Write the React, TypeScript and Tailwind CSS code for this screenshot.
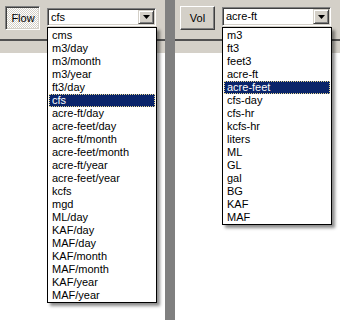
import React from 'react';

const FLOW_UNITS = [
    'cms', 'm3/day', 'm3/month', 'm3/year', 'ft3/day', 'cfs',
    'acre-ft/day', 'acre-feet/day', 'acre-ft/month', 'acre-feet/month',
    'acre-ft/year', 'acre-feet/year', 'kcfs', 'mgd', 'ML/day',
    'KAF/day', 'MAF/day', 'KAF/month', 'MAF/month', 'KAF/year', 'MAF/year'
];

const VOL_UNITS = [
    'm3', 'ft3', 'feet3', 'acre-ft', 'acre-feet', 'cfs-day', 'cfs-hr',
    'kcfs-hr', 'liters', 'ML', 'GL', 'gal', 'BG', 'KAF', 'MAF'
];

interface PanelProps {
    label: string;
    pressed: boolean;
    value: string;
    options: string[];
    selected: string;
    comboTop: string;
}

function Panel({label, pressed, value, options, selected, comboTop}: PanelProps) {
    const buttonClass = pressed
        ? 'border border-t-[#808080] border-l-[#808080] border-b-white border-r-white shadow-[inset_1px_1px_0_#404040,inset_-1px_-1px_0_#d4d0c8] bg-[repeating-conic-gradient(#d4d0c8_0_25%,#ffffff_0_50%)] bg-[length:2px_2px] pt-[1px] pl-[1px]'
        : 'border border-t-white border-l-white border-b-[#404040] border-r-[#404040] shadow-[inset_-1px_-1px_0_#808080] bg-[#d4d0c8]';

    return (
        <div className="w-[165px] h-full flex flex-col bg-white">
            <div className="h-[39px] bg-[#d4d0c8] flex items-start pl-[5px] pt-[6px] gap-[7px]">
                <div className={`w-[35px] h-[24px] flex items-center justify-center text-[11px] text-black ${buttonClass}`}>
                    {label}
                </div>
                <div className={`relative w-[109px] ${comboTop}`}>
                    <div className="h-full bg-white border border-t-[#808080] border-l-[#808080] border-b-white border-r-white shadow-[inset_1px_1px_0_#404040,inset_-1px_-1px_0_#d4d0c8] flex items-center p-[1px]">
                        <span className="flex-1 pl-[2px] text-[11px] text-black leading-none">{value}</span>
                        <div className="w-[16px] h-full bg-[#d4d0c8] border border-t-[#d4d0c8] border-l-[#d4d0c8] border-b-[#404040] border-r-[#404040] shadow-[inset_1px_1px_0_#fff,inset_-1px_-1px_0_#808080] flex items-center justify-center">
                            <svg width="7" height="4" viewBox="0 0 7 4">
                                <path d="M0 0h7L3.5 4z" fill="#000"/>
                            </svg>
                        </div>
                    </div>
                    <div className="absolute left-0 top-[calc(100%+1px)] w-[110px] bg-white border border-black px-[1px] pt-[1px] shadow-[3px_3px_3px_rgba(0,0,0,0.45)] z-10">
                        {options.map(opt => (
                            <div
                                key={opt}
                                className={`h-[13px] pl-[3px] text-[11px] leading-[13px] whitespace-nowrap ${opt === selected ? 'bg-[#0a246a] text-white outline outline-1 outline-dotted outline-[#e8d890] -outline-offset-1' : 'text-black'}`}
                            >
                                {opt}
                            </div>
                        ))}
                    </div>
                </div>
            </div>
            <div className="h-[2px] bg-[#505050]"/>
            <div className="h-[12px] bg-[#d4d0c8]"/>
            <div className="flex-1 bg-white"/>
        </div>
    );
}

export default function App() {
    return (
        <div className="w-[340px] h-[320px] flex overflow-hidden bg-white" style={{fontFamily: '"Liberation Sans", Arial, sans-serif'}}>
            <Panel label="Flow" pressed value="cfs" options={FLOW_UNITS} selected="cfs" comboTop="mt-[2px] h-[18px]"/>
            <div className="w-[10px] h-full bg-[#808080]"/>
            <Panel label="Vol" pressed={false} value="acre-ft" options={VOL_UNITS} selected="acre-feet" comboTop="mt-[1px] h-[19px]"/>
        </div>
    );
}
